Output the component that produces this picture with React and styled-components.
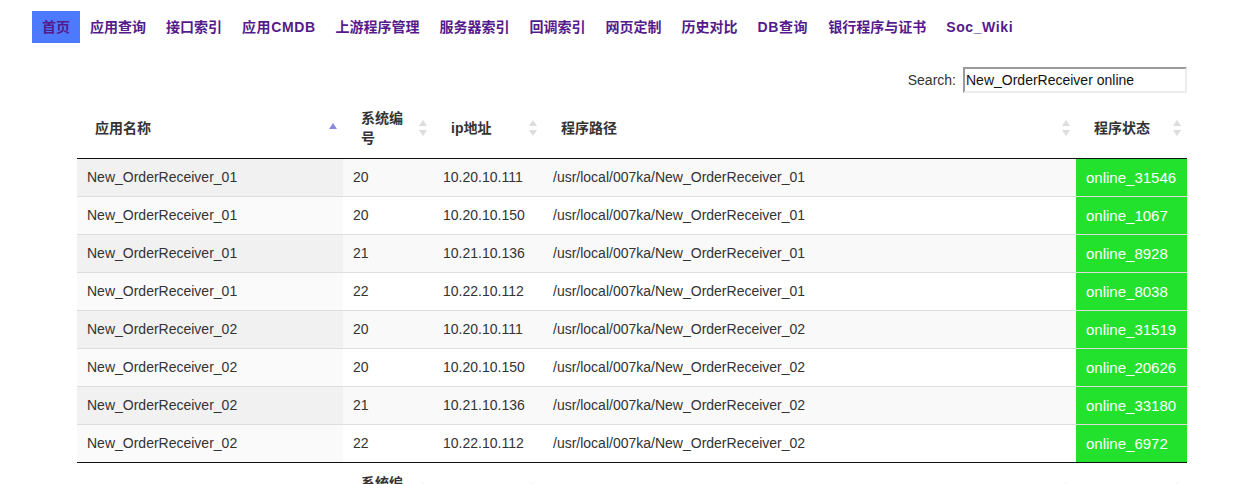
import styled, { createGlobalStyle, css } from "styled-components";

const GlobalStyle = createGlobalStyle`
  body {
    margin: 0;
    background: #fff;
    font-family: "Liberation Sans", Arial, "Noto Sans CJK SC", sans-serif;
    font-size: 14px;
    color: #333;
  }
`;

const NAV_ITEMS = [
  "首页",
  "应用查询",
  "接口索引",
  "应用CMDB",
  "上游程序管理",
  "服务器索引",
  "回调索引",
  "网页定制",
  "历史对比",
  "DB查询",
  "银行程序与证书",
  "Soc_Wiki",
];

const COLUMNS = [
  { title: "应用名称", width: 266, sort: "asc" },
  { title: "系统编号", width: 90, sort: "both" },
  { title: "ip地址", width: 110, sort: "both" },
  { title: "程序路径", width: 533, sort: "both" },
  { title: "程序状态", width: 111, sort: "both" },
];

const ROWS = [
  ["New_OrderReceiver_01", "20", "10.20.10.111", "online_31546"],
  ["New_OrderReceiver_01", "20", "10.20.10.150", "online_1067"],
  ["New_OrderReceiver_01", "21", "10.21.10.136", "online_8928"],
  ["New_OrderReceiver_01", "22", "10.22.10.112", "online_8038"],
  ["New_OrderReceiver_02", "20", "10.20.10.111", "online_31519"],
  ["New_OrderReceiver_02", "20", "10.20.10.150", "online_20626"],
  ["New_OrderReceiver_02", "21", "10.21.10.136", "online_33180"],
  ["New_OrderReceiver_02", "22", "10.22.10.112", "online_6972"],
];

const Nav = styled.nav`
  display: flex;
  padding: 11px 0 0 32px;
  font-family: "Liberation Sans", "Noto Sans CJK SC", sans-serif;
`;

const NavLink = styled.a`
  display: block;
  padding: 6px 10px;
  line-height: 20px;
  font-size: 14px;
  font-weight: bold;
  letter-spacing: ${({ latin }) => (latin ? "0.6px" : "0")};
  color: #551a8b;
  text-decoration: none;
  background: ${({ active }) => (active ? "#4d79fd" : "transparent")};
`;

const Wrapper = styled.div`
  width: 1110px;
  margin-left: 77px;
`;

const SearchRow = styled.div`
  display: flex;
  justify-content: flex-end;
  align-items: center;
  margin-top: 24px;
`;

const SearchLabel = styled.label`
  margin-right: 7px;
  font-size: 14px;
  color: #333;
`;

const SearchInput = styled.input`
  box-sizing: border-box;
  width: 224px;
  height: 26px;
  padding: 0 1px;
  font-family: "Liberation Sans", Arial, sans-serif;
  font-size: 14px;
  color: #111;
  border-style: solid;
  border-width: 2px;
  border-color: #9a9a9a #ececec #ececec #9a9a9a;
  outline: none;
`;

const Table = styled.table`
  width: 1110px;
  margin-top: 5px;
  table-layout: fixed;
  border-collapse: separate;
  border-spacing: 0;
`;

const headCell = css`
  position: relative;
  padding: 10px 18px;
  text-align: left;
  font-weight: bold;
  font-size: 14px;
  line-height: 20px;
  color: #333;
  font-family: "Liberation Sans", "Noto Sans CJK SC", sans-serif;
`;

const Th = styled.th`
  ${headCell}
  border-bottom: 1px solid #111;
`;

const FootTh = styled.th`
  ${headCell}
  padding-bottom: 6px;
  border-top: 1px solid #111;
`;

const SortIcon = styled.span`
  position: absolute;
  right: 6px;
  top: 50%;
  width: 8px;
  height: 16px;
  margin-top: -8px;

  &::before,
  &::after {
    content: "";
    position: absolute;
    left: 0;
    border-left: 4px solid transparent;
    border-right: 4px solid transparent;
  }
  &::before {
    top: ${({ sort }) => (sort === "asc" ? "3px" : "0")};
    border-bottom: 6px solid ${({ sort }) => (sort === "asc" ? "#8a8ade" : "#dcdcdc")};
  }
  &::after {
    bottom: 0;
    display: ${({ sort }) => (sort === "asc" ? "none" : "block")};
    border-top: 6px solid #dcdcdc;
  }
`;

const Tr = styled.tr`
  &:first-child td {
    border-top: none;
  }
`;

const Td = styled.td`
  padding: 8px 10px;
  line-height: 21px;
  font-size: 14px;
  color: #333;
  border-top: 1px solid #ddd;
  white-space: nowrap;
  overflow: hidden;
  background: ${({ sorted, odd }) =>
    sorted ? (odd ? "#f1f1f1" : "#fafafa") : odd ? "#f9f9f9" : "#fff"};
`;

const StatusTd = styled(Td)`
  background: #22e22e;
  color: #fff;
  font-size: 15px;
`;

function HeadRow({ Cell }) {
  return (
    <tr>
      {COLUMNS.map((col) => (
        <Cell key={col.title}>
          {col.title}
          <SortIcon sort={col.sort} />
        </Cell>
      ))}
    </tr>
  );
}

export default function App() {
  return (
    <>
      <GlobalStyle />
      <Nav>
        {NAV_ITEMS.map((item, i) => (
          <NavLink
            key={item}
            href="#"
            active={i === 0 ? 1 : 0}
            latin={/[A-Za-z]/.test(item) ? 1 : 0}
          >
            {item}
          </NavLink>
        ))}
      </Nav>
      <Wrapper>
        <SearchRow>
          <SearchLabel>Search:</SearchLabel>
          <SearchInput defaultValue="New_OrderReceiver online" />
        </SearchRow>
        <Table>
          <colgroup>
            {COLUMNS.map((col) => (
              <col key={col.title} style={{ width: col.width }} />
            ))}
          </colgroup>
          <thead>
            <HeadRow Cell={Th} />
          </thead>
          <tbody>
            {ROWS.map(([name, sys, ip, status], i) => {
              const odd = i % 2 === 0;
              return (
                <Tr key={i}>
                  <Td sorted odd={odd}>{name}</Td>
                  <Td odd={odd}>{sys}</Td>
                  <Td odd={odd}>{ip}</Td>
                  <Td odd={odd}>/usr/local/007ka/{name}</Td>
                  <StatusTd>{status}</StatusTd>
                </Tr>
              );
            })}
          </tbody>
          <tfoot>
            <HeadRow Cell={FootTh} />
          </tfoot>
        </Table>
      </Wrapper>
    </>
  );
}
